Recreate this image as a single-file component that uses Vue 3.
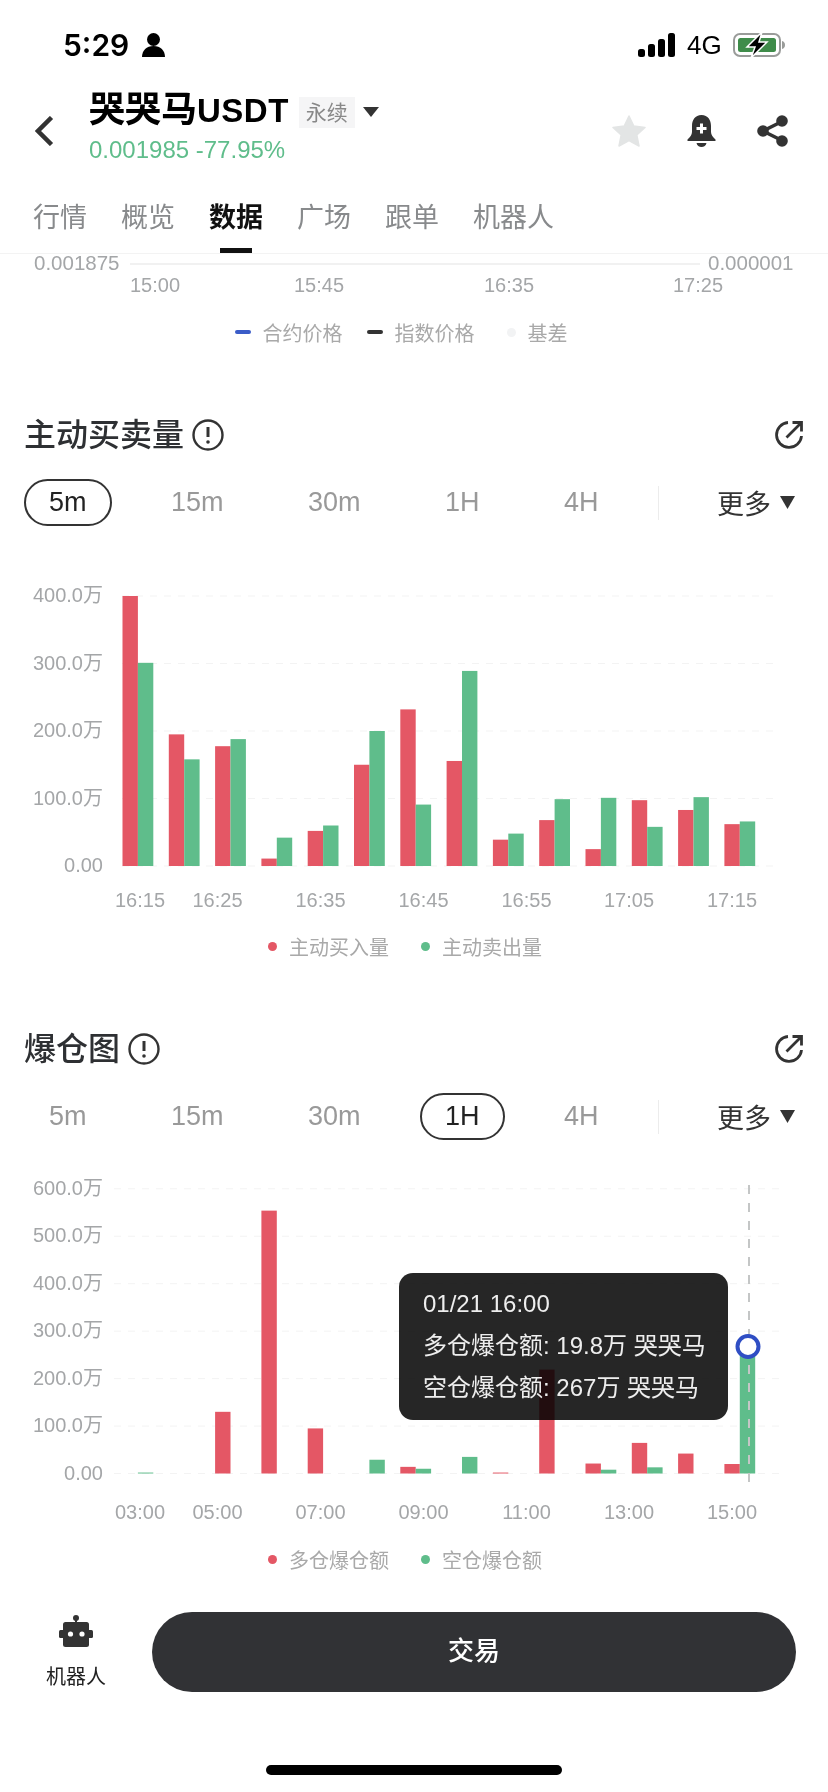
<template>
  <div class="page">
    <!-- status bar -->
    <div class="status">
      <span class="time">5:29</span>
      <svg class="person" width="23" height="24" viewBox="0 0 23 24">
        <circle cx="11.5" cy="6.500" r="6.500" fill="#000" />
        <path d="M0 24c0-6.500 4.500-11 11.500-11s11.500 4.500 11.500 11z" fill="#000" />
      </svg>
      <div class="status-right">
        <svg width="37" height="24" viewBox="0 0 37 24">
          <rect x="0" y="16" width="7" height="8" rx="2.500" fill="#000" />
          <rect x="10" y="11" width="7" height="13" rx="2.500" fill="#000" />
          <rect x="20" y="6" width="7" height="18" rx="2.500" fill="#000" />
          <rect x="30" y="0" width="7" height="24" rx="2.500" fill="#000" />
        </svg>
        <span class="net">4G</span>
        <svg width="52" height="26" viewBox="0 0 52 26">
          <rect x="1" y="2" width="46" height="22" rx="6" fill="#fff" stroke="#9a9c9a" stroke-width="2" />
          <rect x="5" y="6" width="38" height="14" rx="2.500" fill="#3f8c4a" />
          <path d="M49 9c2 0.500 3 2 3 4s-1 3.500-3 4z" fill="#9a9c9a" />
          <path d="M29 0L14 15h8l-4 11 16-16h-8z" fill="#000" stroke="#fff" stroke-width="1.500" />
        </svg>
      </div>
    </div>

    <!-- coin header -->
    <div class="header">
      <svg class="back" width="19" height="30" viewBox="0 0 19 30">
        <path d="M16.500 1.500L3 15l13.500 13.500" fill="none" stroke="#333" stroke-width="4.500" />
      </svg>
      <div class="coin">
        <div class="coin-top">
          <span class="coin-name">哭哭马<span class="coin-usdt">USDT</span></span>
          <span class="coin-tag">永续</span>
          <svg width="16" height="10" viewBox="0 0 16 10"><path d="M0 0h16L8 10z" fill="#333" /></svg>
        </div>
        <div class="coin-price">0.001985 -77.95%</div>
      </div>
      <div class="header-icons">
        <svg width="34" height="32" viewBox="0 0 34 32">
          <path
            d="M17 1l4.800 10 11.200 1.400-8.200 7.600 2.200 11-10-5.500-10 5.500 2.200-11L1 12.400 12.200 11z"
            fill="#e3e5e5"
            stroke="#e3e5e5"
            stroke-width="1.500"
            stroke-linejoin="round"
          />
        </svg>
        <svg width="29" height="32" viewBox="0 0 29 32">
          <path d="M14.500 0C8 0 5 5 5 11v6c0 3-2 5-4.500 7.500V26h28v-1.500C26 22 24 20 24 17v-6C24 5 21 0 14.500 0z" fill="#333" />
          <path d="M9.500 28h10c-0.500 2.500-2.500 4-5 4s-4.500-1.500-5-4z" fill="#333" />
          <path d="M14.500 8.500v10M9.500 13.500h10" stroke="#fff" stroke-width="3" />
        </svg>
        <svg width="31" height="32" viewBox="0 0 31 32">
          <path d="M25 6.500L6 16l19 9.500" fill="none" stroke="#333" stroke-width="3.500" />
          <circle cx="25" cy="6" r="5.800" fill="#333" />
          <circle cx="6" cy="16" r="5.800" fill="#333" />
          <circle cx="25" cy="26" r="5.800" fill="#333" />
        </svg>
      </div>
    </div>

    <!-- tabs -->
    <div class="tabs">
      <span v-for="t in tabs" :key="t" class="tab" :class="{ active: t === '数据' }">{{ t }}</span>
    </div>

    <!-- end of the chart above, scrolled away -->
    <svg class="top-chart" width="828" height="54" viewBox="0 0 828 54">
      <text class="axis small" x="34" y="8">0.001875</text>
      <line x1="130" y1="10" x2="700" y2="10" stroke="#f1f1f1" stroke-width="2" />
      <text class="axis small" x="708" y="8">0.000001</text>
      <text v-for="t in topTimes" :key="t.label" class="axis mid" :x="t.x" y="31">{{ t.label }}</text>
    </svg>
    <div class="legend top-legend">
      <span class="item"><i class="dash blue"></i>合约价格</span>
      <span class="item"><i class="dash black"></i>指数价格</span>
      <span class="item base"><i class="dot faint"></i>基差</span>
    </div>

    <!-- chart sections -->
    <div v-for="c in charts" :key="c.title" class="section">
      <div class="title-row">
        <span class="title">{{ c.title }}</span>
        <svg class="info" width="32" height="32" viewBox="0 0 32 32">
          <circle cx="16" cy="16" r="14.500" fill="none" stroke="#333" stroke-width="2.400" />
          <path d="M16 8v10" stroke="#333" stroke-width="3" />
          <circle cx="16" cy="23" r="1.800" fill="#333" />
        </svg>
        <svg class="open" width="30" height="30" viewBox="0 0 30 30">
          <path d="M14 2.500A12.500 12.500 0 1 0 27.500 16" fill="none" stroke="#333" stroke-width="2.800" />
          <path d="M12.500 17.500L27 3M18.500 2.500H27.500V11.500" fill="none" stroke="#333" stroke-width="2.800" />
        </svg>
      </div>
      <div class="range">
        <span v-for="r in ranges" :key="r" class="range-item" :class="{ on: r === c.active }">{{ r }}</span>
        <i class="range-line"></i>
        <span class="more">更多
          <svg width="15" height="13" viewBox="0 0 15 13"><path d="M0 0h15L7.500 13z" fill="#333" /></svg>
        </span>
      </div>
      <div class="chart">
        <svg width="828" height="394" viewBox="0 0 828 394">
          <g v-for="(l, i) in c.yLabels" :key="l">
            <line
              :x1="c.gridX"
              :y1="c.base - i * c.step"
              x2="780"
              :y2="c.base - i * c.step"
              stroke="#f3f3f3"
              stroke-dasharray="7 7"
            />
            <text class="axis end" x="103" :y="c.base - i * c.step - 1">{{ l }}</text>
          </g>
          <g v-for="(v, i) in c.red" :key="i">
            <rect :x="barX(i)" :y="c.base - barH(c, v)" width="15.400" :height="barH(c, v)" fill="#e45765" />
            <rect :x="barX(i) + 15.400" :y="c.base - barH(c, c.green[i])" width="15.400" :height="barH(c, c.green[i])" fill="#5fbd8b" />
          </g>
          <text v-for="(t, i) in c.xLabels" :key="t" class="axis mid" :x="xPos[i]" :y="c.labelY">{{ t }}</text>
          <template v-if="c.tip">
            <line x1="749" y1="45" x2="749" y2="351" stroke="#c4c6c6" stroke-width="2" stroke-dasharray="9 9" />
            <circle cx="748" cy="206.500" r="10.500" fill="#fff" stroke="#2f4ec4" stroke-width="4" />
          </template>
        </svg>
        <div v-if="c.tip" class="tip">
          <div v-for="line in c.tip" :key="line" class="tip-line">{{ line }}</div>
        </div>
      </div>
      <div class="legend" :class="{ tight: c.tip }">
        <span class="item"><i class="dot red"></i>{{ c.legend[0] }}</span>
        <span class="item"><i class="dot green"></i>{{ c.legend[1] }}</span>
      </div>
    </div>

    <!-- bottom action bar -->
    <div class="bottom">
      <div class="robot">
        <svg width="34" height="32" viewBox="0 0 34 32">
          <path d="M17 3v6" stroke="#333" stroke-width="2" />
          <circle cx="17" cy="3" r="3" fill="#333" />
          <rect x="4" y="7" width="26" height="25" rx="2.500" fill="#333" />
          <rect x="0" y="15" width="34" height="8" rx="1.500" fill="#333" />
          <circle cx="11.500" cy="19" r="2.600" fill="#fff" />
          <circle cx="23" cy="19" r="2.600" fill="#fff" />
        </svg>
        <span>机器人</span>
      </div>
      <div class="trade">交易</div>
    </div>
    <div class="home"></div>
  </div>
</template>

<script setup>
const tabs = ["行情", "概览", "数据", "广场", "跟单", "机器人"];
const ranges = ["5m", "15m", "30m", "1H", "4H"];

const topTimes = [
  { label: "15:00", x: 155 },
  { label: "15:45", x: 319 },
  { label: "16:35", x: 509 },
  { label: "17:25", x: 698 },
];

const xPos = [140, 217.5, 320.5, 423.5, 526.5, 629, 732];

const charts = [
  {
    title: "主动买卖量",
    active: "5m",
    base: 340,
    step: 67.5,
    gridX: 122,
    labelY: 374,
    yLabels: ["0.00", "100.0万", "200.0万", "300.0万", "400.0万"],
    xLabels: ["16:15", "16:25", "16:35", "16:45", "16:55", "17:05", "17:15"],
    red: [400, 195, 177.5, 11, 52, 150, 232, 155.6, 39, 68, 25, 97.5, 83, 62],
    green: [301, 158, 188, 42, 60, 200, 91, 289, 48, 99, 101, 58, 102, 66],
    legend: ["主动买入量", "主动卖出量"],
  },
  {
    title: "爆仓图",
    active: "1H",
    base: 333.5,
    step: 47.45,
    gridX: 114,
    labelY: 371.5,
    yLabels: ["0.00", "100.0万", "200.0万", "300.0万", "400.0万", "500.0万", "600.0万"],
    xLabels: ["03:00", "05:00", "07:00", "09:00", "11:00", "13:00", "15:00"],
    red: [0, 0, 130, 554, 95, 0, 14, 0, 2, 219, 21, 64.5, 42, 20],
    green: [2, 0, 0, 0, 0, 29, 10, 35, 0, 0, 8, 13, 0, 267],
    legend: ["多仓爆仓额", "空仓爆仓额"],
    tip: ["01/21 16:00", "多仓爆仓额: 19.8万 哭哭马", "空仓爆仓额: 267万 哭哭马"],
  },
];

const barX = (i) => 122.5 + i * 46.3;
const barH = (c, v) => (v / 100) * c.step;
</script>

<style scoped>
.page {
  width: 828px;
  height: 1792px;
  overflow: hidden;
  background: #fff;
  font-family: "Liberation Sans", "Noto Sans CJK SC", sans-serif;
  color: #333;
}

.status {
  height: 90px;
  display: flex;
  align-items: center;
  padding: 0 43px 0 63px;
  box-sizing: border-box;
}
.time {
  font-family: Inter, "Liberation Sans", sans-serif;
  font-size: 30px;
  font-weight: 600;
  color: #000;
  width: 79px;
}
.status-right {
  margin-left: auto;
  display: flex;
  align-items: center;
  gap: 12px;
}
.net {
  font-size: 26px;
  color: #000;
  width: 34px;
}

.header {
  height: 98px;
  box-sizing: border-box;
  padding: 3px 40px 19px 35px;
  display: flex;
  align-items: center;
}
.back {
  margin-right: 35px;
}
.coin-top {
  display: flex;
  align-items: center;
  height: 38px;
}
.coin-name {
  font-size: 36px;
  line-height: 38px;
  margin-top: -3px;
  font-weight: 700;
  color: #000;
}
.coin-usdt {
  font-size: 33px;
  letter-spacing: 0.5px;
}
.coin-tag {
  margin: 0 8px 0 10px;
  padding: 0 7px;
  height: 31px;
  line-height: 31px;
  font-size: 21px;
  background: #f5f5f6;
  color: #888;
}
.coin-price {
  height: 38px;
  line-height: 38px;
  font-size: 24px;
  color: #5fbd8b;
}
.header-icons {
  margin-left: auto;
  display: flex;
  align-items: center;
  gap: 41px;
}

.tabs {
  height: 66px;
  box-sizing: border-box;
  border-bottom: 1px solid #f3f3f3;
  padding-left: 33px;
  display: flex;
  gap: 34px;
}
.tab {
  position: relative;
  height: 65px;
  line-height: 60px;
  font-size: 27px;
  color: #888a8c;
}
.tab.active {
  color: #111;
  font-weight: 700;
}
.tab.active::after {
  content: "";
  position: absolute;
  left: 11px;
  bottom: 0;
  width: 32px;
  height: 5px;
  background: #111;
}

.top-chart {
  display: block;
  overflow: visible;
}
.axis {
  font-size: 20px;
  fill: #a4a6a8;
  dominant-baseline: central;
}
.axis.small {
  font-size: 20.5px;
}
.axis.mid {
  text-anchor: middle;
}
.axis.end {
  text-anchor: end;
}

.legend {
  margin-top: 11px;
  height: 30px;
  box-sizing: border-box;
  padding-right: 18px;
  display: flex;
  justify-content: center;
  align-items: center;
  gap: 32px;
  font-size: 20px;
  color: #a9a9a9;
}
.legend.tight {
  margin-top: 10.500px;
}
.top-legend {
  margin-top: 9px;
  padding-right: 26px;
  gap: 24px;
}
.item {
  display: flex;
  align-items: center;
}
.item.base {
  margin-left: 8px;
}
.dash {
  width: 16px;
  height: 4px;
  border-radius: 2px;
  margin-right: 12px;
}
.dash.blue {
  background: #3a5cc8;
}
.dash.black {
  background: #333;
}
.dot {
  width: 9px;
  height: 9px;
  border-radius: 50%;
  margin-right: 12px;
}
.dot.faint {
  background: #f2f3f4;
}
.dot.red {
  background: #e45765;
}
.dot.green {
  background: #5fbd8b;
}

.section {
  margin-top: 68px;
}
.title-row {
  height: 40px;
  padding: 0 24px;
  display: flex;
  align-items: center;
}
.title {
  font-size: 32px;
  line-height: 40px;
  margin-bottom: 1px;
  font-weight: 500;
  color: #2e3033;
}
.info {
  margin-left: 8px;
}
.open {
  margin-left: auto;
}
.range {
  margin-top: 24px;
  height: 47px;
  padding: 0 33px 0 24px;
  display: flex;
  align-items: center;
  gap: 34.500px;
}
.range-item {
  box-sizing: border-box;
  height: 47px;
  line-height: 43px;
  padding: 0 23px;
  border: 2px solid transparent;
  border-radius: 24px;
  font-size: 27px;
  color: #999;
}
.range-item.on {
  border-color: #333;
  color: #222;
}
.range-line {
  width: 1px;
  height: 34px;
  background: #ececec;
}
.more {
  margin-left: auto;
  display: flex;
  align-items: center;
  gap: 9px;
  font-size: 27px;
  color: #333;
}

.chart {
  position: relative;
  height: 394px;
}
.chart svg {
  display: block;
}
.tip {
  position: absolute;
  left: 399px;
  top: 133px;
  width: 329px;
  height: 147px;
  box-sizing: border-box;
  padding: 10px 0 0 24px;
  color: #eeeeee;
  font-size: 24px;
  line-height: 42px;
  white-space: nowrap;
}
.tip::before {
  content: "";
  position: absolute;
  inset: 0;
  background: #262626;
  border-radius: 14px;
  mix-blend-mode: multiply;
}
.tip-line {
  position: relative;
}

.bottom {
  margin-top: 37px;
  height: 80px;
  padding-right: 32px;
  display: flex;
}
.robot {
  width: 152px;
  padding-top: 3px;
  display: flex;
  flex-direction: column;
  align-items: center;
  gap: 18px;
  font-size: 20px;
  line-height: 24px;
  color: #222;
}
.trade {
  flex: 1;
  height: 80px;
  line-height: 78px;
  border-radius: 40px;
  background: #313235;
  color: #fff;
  text-align: center;
  font-size: 26px;
  font-weight: 500;
}
.home {
  width: 296px;
  height: 10px;
  margin: 73px auto 0;
  border-radius: 5px;
  background: #000;
}
</style>
